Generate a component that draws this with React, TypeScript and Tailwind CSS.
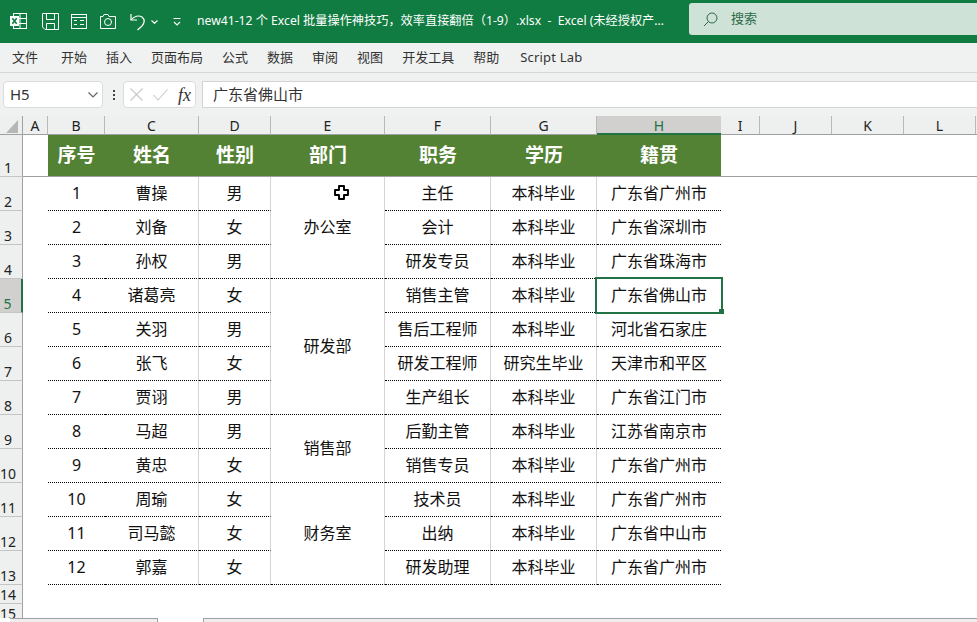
const columns = ["A", "B", "C", "D", "E", "F", "G", "H", "I", "J", "K", "L"];
const headers = ["序号", "姓名", "性别", "部门", "职务", "学历", "籍贯"];

const departments: Record<number, { name: string; span: string }> = {
  0: { name: "办公室", span: "row-span-3" },
  3: { name: "研发部", span: "row-span-4" },
  7: { name: "销售部", span: "row-span-2" },
  9: { name: "财务室", span: "row-span-3" },
};

const rows = [
  ["1", "曹操", "男", "主任", "本科毕业", "广东省广州市"],
  ["2", "刘备", "女", "会计", "本科毕业", "广东省深圳市"],
  ["3", "孙权", "男", "研发专员", "本科毕业", "广东省珠海市"],
  ["4", "诸葛亮", "女", "销售主管", "本科毕业", "广东省佛山市"],
  ["5", "关羽", "男", "售后工程师", "本科毕业", "河北省石家庄"],
  ["6", "张飞", "女", "研发工程师", "研究生毕业", "天津市和平区"],
  ["7", "贾诩", "男", "生产组长", "本科毕业", "广东省江门市"],
  ["8", "马超", "男", "后勤主管", "本科毕业", "江苏省南京市"],
  ["9", "黄忠", "女", "销售专员", "本科毕业", "广东省广州市"],
  ["10", "周瑜", "女", "技术员", "本科毕业", "广东省广州市"],
  ["11", "司马懿", "女", "出纳", "本科毕业", "广东省中山市"],
  ["12", "郭嘉", "女", "研发助理", "本科毕业", "广东省广州市"],
];

const menus = ["开始", "插入", "页面布局", "公式", "数据", "审阅", "视图", "开发工具", "帮助"];

function QuickAccess() {
  return (
    <div className="flex items-center">
      <svg width="17" height="17" viewBox="0 0 17 17" className="ml-[10px]">
        <rect x="3.5" y="0.5" width="13" height="15" fill="none" stroke="#fff" />
        <path d="M10 0.5V15.5M3.5 5.5H16.5M3.5 10.5H16.5" stroke="#fff" />
        <rect x="0" y="3" width="9" height="10" fill="#fff" />
        <path d="M2.3 5.2L6.7 10.8M6.7 5.2L2.3 10.8" stroke="#107c41" strokeWidth="1.6" />
      </svg>
      <svg width="17" height="17" viewBox="0 0 17 17" fill="none" stroke="#fff" className="ml-[15px]">
        <path d="M0.5 0.5H16.5V16.5H3L0.5 14Z" />
        <path d="M4.5 0.5V6.5H12.5V0.5M4.5 16.5V10.5H12.5V16.5" />
      </svg>
      <svg width="17" height="15" viewBox="0 0 17 15" fill="none" stroke="#fff" className="ml-[12px]">
        <rect x="0.5" y="0.5" width="15" height="14" />
        <path d="M0.5 3.5H15.5M3 6.5H6M9 6.5H13M3 10.5H6M9 10.5H13" />
      </svg>
      <svg width="17" height="15" viewBox="0 0 17 15" fill="none" stroke="#fff" className="ml-[12px]">
        <path d="M0.5 2.5H3L4 0.5H8L9 2.5H15.5V14.5H0.5Z" />
        <circle cx="8" cy="8" r="3.5" />
      </svg>
      <svg width="16" height="18" viewBox="0 0 16 18" fill="none" stroke="#fff" strokeWidth="1.2" className="ml-[13px]">
        <path d="M1 1V7H7" />
        <path d="M1 7C4 3 9 2 12 4C15 6.5 14.5 10 12 13L7.5 17" />
      </svg>
      <svg width="7" height="4" viewBox="0 0 7 4" fill="none" stroke="#fff" strokeWidth="1.2" className="ml-[5px]">
        <path d="M0.5 0.5L3.5 3.3L6.5 0.5" />
      </svg>
      <svg width="8" height="8" viewBox="0 0 8 8" fill="none" stroke="#fff" strokeWidth="1.1" className="ml-[15px]">
        <path d="M0.5 0.5H7.5M1 4L4 7L7 4" />
      </svg>
    </div>
  );
}

function TitleBar() {
  return (
    <div className="flex h-[43px] shrink-0 items-center bg-[#107c41] text-white">
      <QuickAccess />
      <div className="ml-[16px] w-[472px] whitespace-nowrap pb-[1px] text-[12.2px]">
        new41-12 个 Excel 批量操作神技巧，效率直接翻倍（1-9）.xlsx&nbsp; -&nbsp; Excel (未经授权产...
      </div>
      <div className="mb-[5px] ml-[20px] flex h-[32px] flex-1 items-center rounded-l-[3px] bg-[#cfe2d7] text-[#2b6b4a]">
        <svg width="15" height="15" viewBox="0 0 15 15" fill="none" stroke="#2b6b4a" className="ml-[14px]">
          <circle cx="9" cy="6" r="5" />
          <path d="M5.5 9.5L1 14" />
        </svg>
        <span className="ml-[13px] text-[13px]">搜索</span>
      </div>
    </div>
  );
}

function MenuBar() {
  return (
    <div className="flex h-[30px] shrink-0 items-center border-b border-b-[#d6d6d6] bg-[#f0f1f1] pl-[12px] text-[13px] text-[#333]">
      <span className="mr-[23px]">文件</span>
      <div className="flex gap-[19px]">
        {menus.map((m) => (
          <span key={m}>{m}</span>
        ))}
      </div>
      <span className="ml-[21px] tracking-[0.2px]">Script Lab</span>
    </div>
  );
}

function FormulaBar() {
  return (
    <div className="flex h-[43px] shrink-0 items-start bg-[#f0f1f1] pt-[8px]">
      <div className="ml-[3px] flex h-[27px] w-[100px] items-center justify-between rounded-[4px] border border-[#dcdcdc] bg-white pl-[6px] pr-[4px] text-[15px] text-[#333]">
        H5
        <svg width="10" height="6" viewBox="0 0 10 6" fill="none" stroke="#666" strokeWidth="1.2">
          <path d="M0.5 0.5L5 5L9.5 0.5" />
        </svg>
      </div>
      <div className="ml-[10px] mr-[8px] mt-[9px] flex flex-col gap-[2px]">
        <div className="h-[2px] w-[2px] bg-[#444]" />
        <div className="h-[2px] w-[2px] bg-[#444]" />
        <div className="h-[2px] w-[2px] bg-[#444]" />
      </div>
      <div className="flex h-[27px] w-[73px] items-center rounded-[4px] border border-[#dcdcdc] bg-white pl-[6px]">
        <svg width="13" height="13" viewBox="0 0 13 13" stroke="#c8c8c8" fill="none" strokeWidth="1.1">
          <path d="M0.5 0.5L12.5 12.5M12.5 0.5L0.5 12.5" />
        </svg>
        <svg width="15" height="12" viewBox="0 0 15 12" stroke="#c8c8c8" fill="none" strokeWidth="1.1" className="ml-[10px]">
          <path d="M0.5 6L5 11L14.5 0.5" />
        </svg>
        <span className="ml-[10px] font-['Liberation_Serif',serif] text-[18px] italic leading-none text-[#333]">fx</span>
      </div>
      <div className="ml-[6px] flex h-[27px] flex-1 items-center border border-r-0 border-[#d4d4d4] bg-white pl-[10px] text-[15px] text-[#333]">
        广东省佛山市
      </div>
    </div>
  );
}

function RowHead({ label, selected }: { label: number; selected?: boolean }) {
  return (
    <div
      className={
        selected
          ? "flex items-end justify-center border-b border-r-2 border-b-[#c4c4c4] border-r-[#217346] bg-[#d2d0ce] pr-[6px] text-[14px] leading-[17px] text-[#217346]"
          : "flex items-end justify-center border-b border-r border-b-[#c4c4c4] border-r-[#a0a0a0] bg-[#eef0ef] pr-[6px] text-[14px] leading-[17px] text-[#222]"
      }
    >
      {label}
    </div>
  );
}

function DataCell({ text, last }: { text: string; last?: boolean }) {
  return (
    <div
      className={
        last
          ? "flex items-center justify-center border-b border-dotted border-b-black pb-[1px] text-[16px] text-[#111]"
          : "flex items-center justify-center border-b border-r border-b-black border-r-[#d4d4d4] pb-[1px] text-[16px] text-[#111] [border-bottom-style:dotted]"
      }
    >
      {text}
    </div>
  );
}

function Sheet() {
  return (
    <div className="relative grid min-h-0 flex-1 grid-cols-[23px_25px_57px_94px_72px_114px_106px_106px_124px_39px_72px_72px_72px_1fr] grid-rows-[19px_42px_repeat(12,34px)_19px_19px] overflow-hidden bg-white font-['Noto_Sans','Noto_Sans_CJK_SC',sans-serif]">
      {/* column letters */}
      <div className="flex items-end justify-end border-b border-r border-b-[#a0a0a0] border-r-[#a0a0a0] bg-[#eef0ef] pb-[1px] pr-[4px]">
        <div className="h-0 w-0 border-b-[13px] border-l-[12px] border-b-[#b5b7b6] border-l-transparent" />
      </div>
      {columns.map((c) =>
        c === "H" ? (
          <div key={c} className="flex items-center justify-center border-b-2 border-b-[#217346] bg-[#d2d0ce] pt-[1px] text-[14px] text-[#217346]">
            {c}
          </div>
        ) : (
          <div key={c} className="flex items-center justify-center border-b border-r border-b-[#a0a0a0] border-r-[#b8b8b8] bg-[#eef0ef] pt-[1px] text-[14px] text-[#222]">
            {c}
          </div>
        ),
      )}
      <div className="border-b border-b-[#a0a0a0] bg-[#eef0ef]" />

      {/* frozen header row */}
      <RowHead label={1} />
      <div className="border-b border-b-[#a0a0a0]" />
      {headers.map((h) => (
        <div key={h} className="flex items-center justify-center border-b border-b-[#a0a0a0] bg-[#548235] text-[19px] font-bold text-white">
          {h}
        </div>
      ))}
      <div className="col-span-5 border-b border-b-[#a0a0a0]" />

      {rows.map((row, i) => {
        const dept = departments[i];
        return (
          <div key={row[0]} className="contents">
            <RowHead label={i + 2} selected={i === 3} />
            <div />
            <div className="flex items-center justify-center border-b border-dotted border-b-black pb-[1px] text-[16px] text-[#111]">{row[0]}</div>
            <DataCell text={row[1]} />
            <DataCell text={row[2]} />
            {dept && (
              <div className={`${dept.span} flex items-center justify-center border-b border-r border-b-black border-r-[#d4d4d4] pb-[1px] text-[16px] text-[#111] [border-bottom-style:dotted]`}>
                {dept.name}
              </div>
            )}
            <DataCell text={row[3]} />
            <DataCell text={row[4]} />
            {i === 3 ? (
              <div className="relative flex items-center justify-center border-b border-dotted border-b-black pb-[1px] text-[16px] text-[#111]">
                {row[5]}
                <div className="absolute -left-[2px] -top-[2px] h-[37px] w-[128px] border-2 border-[#217346]" />
                <div className="absolute -bottom-[2px] -right-[3px] h-[5px] w-[5px] bg-[#217346]" />
              </div>
            ) : (
              <DataCell text={row[5]} last />
            )}
            <div className="col-span-5" />
          </div>
        );
      })}

      <RowHead label={14} />
      <div className="col-span-13" />
      <RowHead label={15} />
      <div className="col-span-13" />

      {/* mouse pointer */}
      <svg width="15" height="15" viewBox="0 0 15 15" className="absolute left-[334px] top-[69px]">
        <path d="M5 1H10V5H14V10H10V14H5V10H1V5H5Z" fill="#fff" stroke="#000" strokeWidth="1.9" strokeLinejoin="round" />
      </svg>
    </div>
  );
}

function TabStrip() {
  return (
    <div className="flex h-[4px] shrink-0">
      <div className="ml-[10px] w-[148px] border-r border-t border-[#a0a0a0] bg-[#eeeeee]" />
      <div className="ml-[45px] flex-1 border-l border-t border-[#a0a0a0] bg-[#eeeeee]" />
    </div>
  );
}

export default function App() {
  return (
    <div className="flex h-[622px] w-[977px] flex-col overflow-hidden bg-white font-['Noto_Sans','Noto_Sans_CJK_SC',sans-serif]">
      <TitleBar />
      <MenuBar />
      <FormulaBar />
      <Sheet />
      <TabStrip />
    </div>
  );
}
